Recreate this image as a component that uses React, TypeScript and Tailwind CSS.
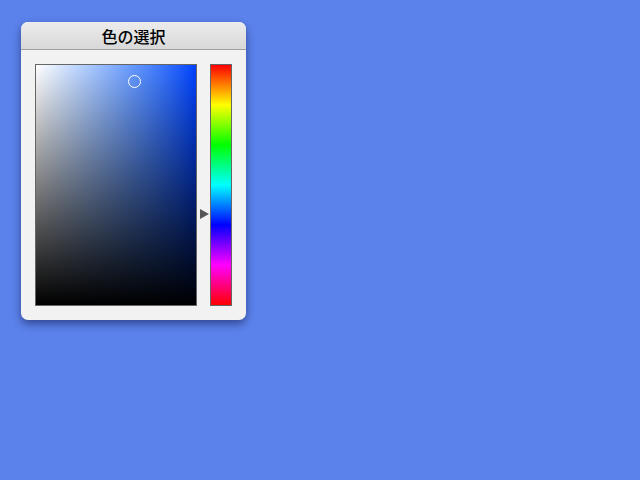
import React from "react";

export default function App() {
  return (
    <div className="w-[640px] h-[480px] bg-[#5b82eb] relative" style={{ fontFamily: '"Noto Sans CJK JP", "Noto Sans", sans-serif' }}>
      <div className="absolute left-[21px] top-[22px] w-[225px] h-[298px] bg-[#f2f2f2] rounded-[7px] shadow-[0_4px_8px_rgba(0,0,40,0.45)] flex flex-col overflow-hidden">
        <div className="h-[28px] bg-gradient-to-b from-[#ececec] to-[#d8d8d8] border-b border-[#a0a0a0] flex items-center justify-center text-[16px] font-medium text-black leading-none">
          色の選択
        </div>
        <div className="flex pl-[14px] pt-[14px]">
          <div className="relative w-[162px] h-[242px] border border-[#666] bg-gradient-to-r from-white to-[#0040ff]">
            <div className="absolute inset-0 bg-gradient-to-b from-transparent to-black" />
            <div className="absolute left-[92px] top-[10px] w-[13px] h-[13px] rounded-full border border-white" />
          </div>
          <div className="w-[13px] relative">
            <div className="absolute left-[3px] top-[145px] w-0 h-0 border-y-[5px] border-y-transparent border-l-[9px] border-l-[#555]" />
          </div>
          <div className="w-[22px] h-[242px] border border-[#666] bg-[linear-gradient(to_bottom,#ff0000,#ffff00,#00ff00,#00ffff,#0000ff,#ff00ff,#ff0000)]" />
        </div>
      </div>
    </div>
  );
}
